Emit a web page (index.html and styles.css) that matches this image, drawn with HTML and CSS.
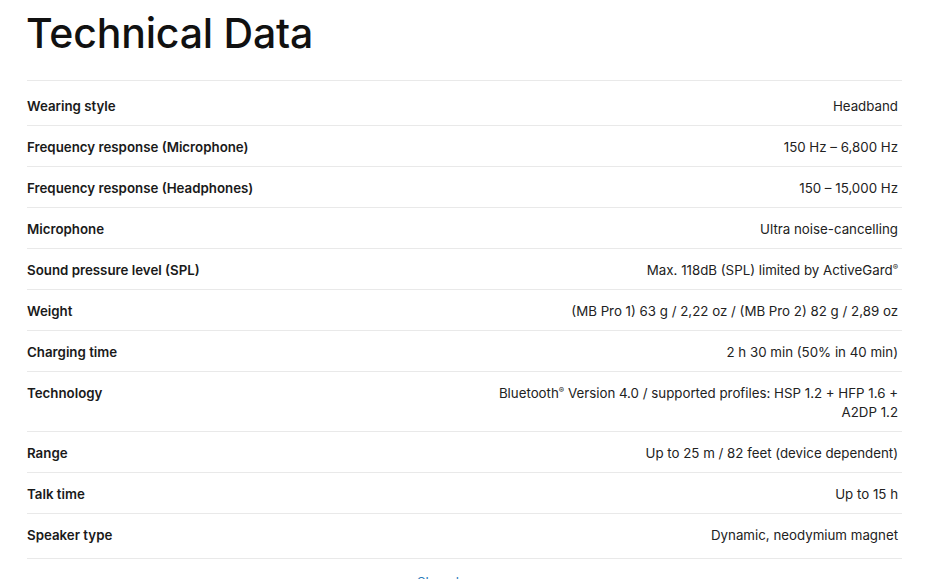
FILE: index.html
```html
<!DOCTYPE html>
<html>
<head>
<meta charset="utf-8">
<link rel="stylesheet" href="styles.css">
</head>
<body>
<main class="page">
  <h1 class="title">Technical Data</h1>
  <div class="specs">
    <div class="row"><div class="label">Wearing style</div><div class="value">Headband</div></div>
    <div class="row"><div class="label">Frequency response (Microphone)</div><div class="value">150 Hz – 6,800 Hz</div></div>
    <div class="row"><div class="label">Frequency response (Headphones)</div><div class="value">150 – 15,000 Hz</div></div>
    <div class="row"><div class="label">Microphone</div><div class="value">Ultra noise-cancelling</div></div>
    <div class="row"><div class="label">Sound pressure level (SPL)</div><div class="value">Max. 118dB (SPL) limited by ActiveGard<sup>®</sup></div></div>
    <div class="row"><div class="label">Weight</div><div class="value">(MB Pro 1) 63 g / 2,22 oz / (MB Pro 2) 82 g / 2,89 oz</div></div>
    <div class="row"><div class="label">Charging time</div><div class="value">2 h 30 min (50% in 40 min)</div></div>
    <div class="row"><div class="label">Technology</div><div class="value wrap">Bluetooth<sup>®</sup> Version 4.0 / supported profiles: HSP 1.2 + HFP 1.6 + A2DP 1.2</div></div>
    <div class="row"><div class="label">Range</div><div class="value">Up to 25 m / 82 feet (device dependent)</div></div>
    <div class="row"><div class="label">Talk time</div><div class="value">Up to 15 h</div></div>
    <div class="row"><div class="label">Speaker type</div><div class="value">Dynamic, neodymium magnet</div></div>
  </div>
  <div class="more"><a class="more-link" href="#">Show less</a></div>
</main>
</body>
</html>
```
FILE: styles.css
```css
html, body {
  margin: 0;
  padding: 0;
  background: #fff;
}
body {
  font-family: "Inter", "Roboto", "Liberation Sans", sans-serif;
  color: #1c1c1c;
}
.page {
  width: 875px;
  margin-left: 27px;
  padding-top: 9px;
}
.title {
  margin: 0 0 0 -1px;
  font-size: 41px;
  font-weight: 500;
  line-height: 48px;
  letter-spacing: -0.2px;
  color: #111;
  height: 71px;
}
.specs {
  border-top: 1px solid #e9e9e9;
  border-bottom: 1px solid #e9e9e9;
  padding: 4px 0;
}
.row {
  display: flex;
  justify-content: space-between;
  align-items: flex-start;
  padding: 12px 4px 9px 0;
  line-height: 19px;
  font-size: 13.3px;
  border-top: 1px solid #e9e9e9;
}
.row:first-child {
  border-top: none;
}
.label {
  font-weight: 600;
  color: #1a1a1a;
  white-space: nowrap;
}
.value {
  text-align: right;
  color: #222;
}
.value.wrap {
  max-width: 410px;
}
sup {
  font-size: 8px;
  line-height: 0;
  vertical-align: 5px;
}
.more {
  padding: 12px 0 0 390px;
}
.more-link {
  color: #2b7bb9;
  font-size: 13.3px;
  text-decoration: none;
}
```
